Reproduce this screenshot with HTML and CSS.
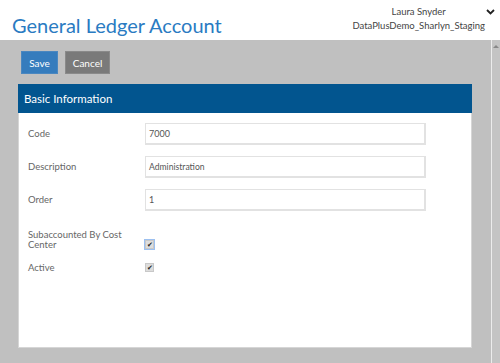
FILE: index.html
```html
<!DOCTYPE html>
<html lang="en">
  <head>
    <meta charset="UTF-8" />
    <title>General Ledger Account</title>
    <link rel="stylesheet" href="styles.css">
  </head>
  <body>
    <header class="topBar">
      <h1 class="pageTitle">General Ledger Account</h1>
      <div class="userBlock">
        <div class="userText">
          <div>Laura Snyder</div>
          <div>DataPlusDemo_Sharlyn_Staging</div>
        </div>
        <svg class="userChevron" width="9" height="6" viewBox="0 0 9 6">
          <path d="M1 1 L4.5 4.5 L8 1" fill="none" stroke="#222" stroke-width="1.8" />
        </svg>
      </div>
    </header>

    <div class="workArea">
      <main class="content">
        <div class="toolbar">
          <button class="btn btnSave">Save</button>
          <button class="btn btnCancel">Cancel</button>
        </div>

        <section class="panel">
          <div class="panelHeader">Basic Information</div>
          <div class="panelBody">
            <div class="formRow">
              <label>Code</label>
              <div class="field">7000</div>
            </div>
            <div class="formRow">
              <label>Description</label>
              <div class="field small">Administration</div>
            </div>
            <div class="formRow">
              <label>Order</label>
              <div class="field">1</div>
            </div>
            <div class="checkRow first">
              <label>Subaccounted By Cost Center</label>
              <span class="check focused">&#10004;</span>
            </div>
            <div class="checkRow">
              <label>Active</label>
              <span class="check">&#10004;</span>
            </div>
          </div>
        </section>
      </main>
      <div class="scrollbar">
        <div class="scrollArrow"></div>
      </div>
    </div>
  </body>
</html>
```

FILE: styles.css
```css
body {
  margin: 0;
  width: 500px;
  height: 363px;
  overflow: hidden;
  font-family: "Lato", sans-serif;
  background-color: #fff;
}

.topBar {
  height: 40px;
  display: flex;
  justify-content: space-between;
  align-items: flex-start;
  box-sizing: border-box;
}
.pageTitle {
  margin: 14px 0 0 12px;
  font-size: 20px;
  font-weight: 400;
  color: #2a7bc2;
  line-height: 22px;
}
.userBlock {
  display: flex;
  align-items: flex-start;
  padding: 5px 5px 0 0;
  gap: 1px;
}
.userText {
  text-align: center;
  font-size: 9.5px;
  line-height: 14px;
  color: #444;
}
.userChevron {
  margin-top: 4px;
}

.workArea {
  display: flex;
  height: 323px;
  background-color: #c0c0c0;
}
.content {
  flex: 1;
  padding: 11px 19px 0 18px;
}
.toolbar {
  display: flex;
  gap: 7px;
  padding-left: 3px;
  margin-bottom: 10px;
}
.btn {
  height: 23px;
  border: 1px solid transparent;
  color: #fff;
  font-family: "Lato", sans-serif;
  font-size: 10px;
  padding: 0 6px;
  cursor: pointer;
}
.btnSave {
  width: 37px;
  background-color: #357cbd;
  border-color: #4a87c0;
}
.btnCancel {
  width: 45px;
  background-color: #7a7a7a;
  border-color: #8a8a8a;
}

.panel {
  background-color: #fff;
  border: 1px solid #d6d6d6;
  height: 264px;
  box-sizing: border-box;
}
.panelHeader {
  height: 29px;
  background-color: #02558f;
  color: #fff;
  font-size: 11.5px;
  line-height: 30px;
  padding-left: 6px;
  margin: -1px -1px 0 -1px;
}
.panelBody {
  padding: 10px 0 0 9px;
}
.formRow {
  display: grid;
  grid-template-columns: 117px 281px;
  align-items: center;
  margin-bottom: 11px;
}
label {
  font-size: 9.5px;
  color: #666;
  padding-right: 14px;
  line-height: 10px;
}
.field {
  height: 22px;
  box-sizing: border-box;
  border: 2px solid #e2e2e2;
  border-width: 1px 2px 2px 1px;
  font-size: 9px;
  color: #555;
  line-height: 20px;
  padding-left: 3px;
}
.field.small {
  font-size: 8.6px;
}

.checkRow {
  display: grid;
  grid-template-columns: 117px 20px;
  align-items: center;
}
.checkRow.first {
  margin-top: 19px;
  margin-bottom: 13px;
}
.check {
  width: 7px;
  height: 7px;
  background-color: #ddd;
  border: 1px solid #c8c8c8;
  font-size: 7px;
  line-height: 7px;
  text-align: center;
  color: #222;
  margin-top: -1px;
}
.check.focused {
  outline: 1px solid #9cc0f0;
  margin-top: 8px;
}

.scrollbar {
  width: 9px;
  border-left: 1px solid #ececec;
  background-color: #c4c4c4;
  display: flex;
  justify-content: center;
  padding-top: 5px;
  box-sizing: border-box;
}
.scrollArrow {
  width: 0;
  height: 0;
  border-left: 3px solid transparent;
  border-right: 3px solid transparent;
  border-bottom: 3px solid #888;
}
```
